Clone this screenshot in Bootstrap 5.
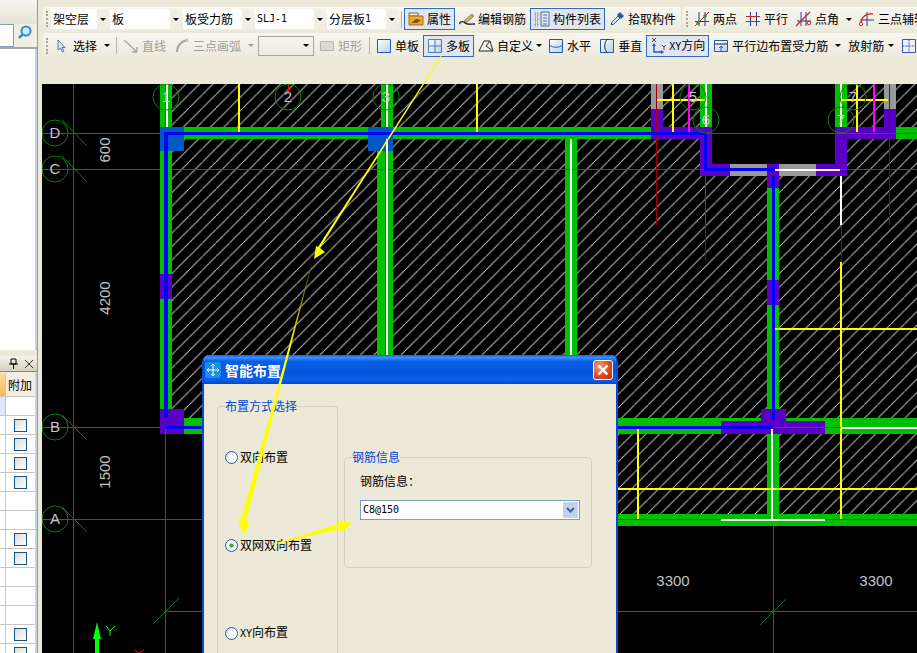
<!DOCTYPE html>
<html lang="zh">
<head>
    <meta charset="UTF-8">
    <title>智能布置</title>
    <link href="https://cdn.jsdelivr.net/npm/bootstrap@5.3.0/dist/css/bootstrap.min.css" rel="stylesheet">
    <style>
        html, body {
            margin: 0;
            width: 917px;
            height: 653px;
            overflow: hidden;
            background-color: #ece9d8;
            font-family: "Noto Sans CJK SC", "Liberation Sans", sans-serif;
            font-size: 12px;
            line-height: 12px;
            color: #000;
        }
        .lat { font-family: "DejaVu Sans Mono", monospace; font-size: 10px; }
        .shell { width: 917px; height: 653px; overflow: hidden; }

        /* left dock */
        .dock { width: 42px; height: 653px; flex: none; overflow: hidden; }
        .dock-inner { width: 38px; height: 653px; border-right: 1px solid #9a9a90; overflow: hidden; }
        .dock-inner > div { flex: none; }
        .dock-head { height: 24px; background: linear-gradient(#f6f5ee, #e6e3d2); }
        .dock-search { height: 25px; border-bottom: 2px solid #a8a89c; background: #f1efe4; }
        .dock-input { width: 14px; height: 23px; background: #fff; border: 1px solid #7f9db9; border-left: 0; }
        .dock-white { height: 301px; background: #fff; border-right: 2px solid #c3d3e6; }
        .dock-gap { height: 6px; }
        .dock-title { height: 16px; background: linear-gradient(#f4f3ea, #d4d0c0); border-bottom: 1px solid #85857a; padding: 0 4px 0 9px; }
        .grid-wrap { background: #fff; margin-top: 1px; border-right: 2px solid #c3d3e6; }
        .grid-row { height: 19px; border-bottom: 1px solid #c6c6c6; }
        .grid-row.top-row { height: 24px; }
        .grid-row.last-row { height: 10px; border-bottom: 0; align-items: flex-start; }
        .grid-lead { width: 6px; height: 100%; border-right: 1px solid #c6c6c6; }
        .top-row .grid-lead { background: linear-gradient(#fbdc9c, #f4b95c); }
        .grid-row.sel-row .grid-lead { background: #dde7f6; }
        .grid-cell { flex: 1; height: 100%; }
        .top-row .grid-cell { background: #f1efe4; font-size: 12px; padding-left: 2px; }
        .last-row .grid-cell { padding-top: 3px; overflow: hidden; }
        .grid-check.form-check-input {
            width: 13px;
            height: 13px;
            margin: 0;
            flex: none;
            border: 1px solid #1c5180;
            border-radius: 0;
            background: linear-gradient(135deg, #dcdcd6, #fff);
        }

        /* toolbars */
        .work { width: 875px; height: 653px; flex: none; overflow: hidden; }
        .bars { height: 84px; padding-top: 7px; flex: none; }
        .tool-row { height: 24px; white-space: nowrap; }
        .tool-row.second { height: 25px; margin-top: 2px; }
        .tool-bar { height: 100%; background: linear-gradient(#f7f6ef, #eceadc); border-radius: 3px; padding-left: 3px; }
        .bar-main { width: 638px; margin-left: 1px; flex: none; }
        .bar-axis { flex: 1; min-width: 0; margin-left: 2px; overflow: hidden; border-radius: 3px 0 0 3px; }
        .bar-wide { width: 100%; margin-left: 1px; overflow: hidden; }
        .grip { width: 2px; height: 16px; margin-right: 2px; border-left: 2px dotted #a8a69a; flex: none; }
        .bar-main .grip { margin-right: 3px; }
        .tb-sep { width: 1px; height: 17px; background: #b5b3a5; margin: 0 2px 0 3px; flex: none; }
        .bar-main .tb-sep { margin-left: 2px; }
        .tb-btn {
            height: 22px;
            padding: 0 3px;
            gap: 3px;
            border: 1px solid transparent;
            flex: none;
        }
        .tb-btn svg { width: 16px; height: 16px; flex: none; }
        .tb-btn.on { border-color: #316ac5; background: #e1e6ee; }
        .tb-btn.off { color: #a19f92; }
        .tb-caret { width: 0; height: 0; border-left: 3px solid transparent; border-right: 3px solid transparent; border-top: 3px solid #000; flex: none; }
        .tb-btn.off .tb-caret { border-top-color: #a19f92; }
        .caret-wide { margin: 0 -1px 0 4px; }
        .caret-tight { margin: 0 -2px 0 0; }
        .caret-after { margin: 0 -1px 0 1px; }
        .pick { height: 20px; margin-right: 2px; flex: none; }
        .pick-text { background: #fff; height: 20px; padding-left: 2px; }
        .pick-arrow { width: 11px; height: 20px; background: #f1efe4; }
        .pick-off { width: 56px; height: 20px; border: 1px solid #a8a69a; margin: 0 1px; padding-right: 4px; flex: none; }

        /* canvas */
        .cad { height: 569px; background: #000; overflow: hidden; flex: none; }
        .cad svg { display: block; }
        .axis-text { font-family: "Liberation Sans", sans-serif; font-size: 15px; fill: #c4c4c4; text-anchor: middle; }

        /* dialog */
        .xp-dialog {
            position: absolute;
            left: 160px;
            top: 355px;
            width: 416px;
            height: 298px;
            overflow: hidden;
            background: #ece9d8;
            border: 2px solid #0a48d8;
            border-top: 0;
            border-bottom: 0;
            border-radius: 7px 7px 0 0;
        }
        .xp-title {
            height: 29px;
            margin: 0 -2px;
            padding: 0 5px 0 3px;
            border-radius: 7px 7px 0 0;
            background: linear-gradient(#0a5be0 0, #3a93ff 8%, #0a5fe8 22%, #0554dc 60%, #0a62ec 85%, #0446c8 100%);
        }
        .xp-title-text { color: #fff; font-size: 14px; font-weight: 700; line-height: 14px; margin-left: 4px; }
        .xp-close {
            width: 20px;
            height: 20px;
            padding: 0;
            border: 1px solid #fff;
            border-radius: 3px;
            background: radial-gradient(circle at 30% 30%, #f0a080, #d8451c 60%, #b8300c);
        }
        .xp-body { height: 269px; overflow: hidden; padding: 16px 0 0 13px; gap: 6px; }
        .xp-group { border: 1px solid #d0d0bf; border-radius: 4px; min-width: 0; margin: 0; flex: none; }
        .xp-group legend {
            float: none;
            width: auto;
            margin: 0;
            padding: 0;
            font-size: 12px;
            line-height: 12px;
            color: #0046d5;
        }
        .way-group { width: 121px; height: 253px; padding: 37px 0 0 7px; gap: 72px; border-bottom: 0; border-radius: 4px 4px 0 0; }
        .bar-group { width: 248px; height: 117px; margin-top: 51px; padding: 12px 0 0 15px; }
        .bar-group legend { margin-left: -8px; }
        .way-item { height: 16px; margin: 0; padding: 0; min-height: 0; gap: 2px; }
        .way-radio.form-check-input {
            float: none;
            width: 13px;
            height: 13px;
            margin: 0;
            border: 1px solid #34608a;
            background: radial-gradient(circle at 65% 65%, #fff 40%, #c8ccd2 100%);
        }
        .way-radio.form-check-input:checked {
            border-color: #34608a;
            background: radial-gradient(circle, #2fa84a 0, #2fa84a 22%, #fff 32%, #fff 55%, #c8ccd2 100%);
        }
        .way-label { margin: 0; opacity: 1 !important; }
        .rebar-label { margin-bottom: 13px; }
        .rebar-combo { width: 220px; height: 20px; background: #fff; border: 1px solid #7f9db9; padding: 1px 1px 1px 2px; }
        .rebar-btn { width: 15px; height: 16px; background: #c1d2ee; border-radius: 1px; }

        .arrow-layer { position: absolute; left: 0; top: 0; width: 917px; height: 653px; pointer-events: none; }
    </style>
</head>

<body>
    <div class="shell d-flex position-relative">
        <!-- 左侧面板 -->
        <div class="dock">
            <div class="dock-inner d-flex flex-column">
                <div class="dock-head"></div>
                <div class="dock-search d-flex">
                    <div class="dock-input"></div>
                    <svg class="ms-1" width="16" height="16" viewBox="0 0 16 16"><circle cx="9" cy="7" r="4.5" fill="#d6ecfb" stroke="#2b8fd8" stroke-width="2"/><path d="M5.5 10.5 2 14" stroke="#2b8fd8" stroke-width="2.5"/></svg>
                </div>
                <div class="dock-white"></div>
                <div class="dock-gap"></div>
                <div class="dock-title d-flex align-items-center justify-content-between">
                    <svg width="9" height="11" viewBox="0 0 9 11"><path d="M2 1h5v5H2zM0 6h9M4.5 6v5" fill="none" stroke="#000"/></svg>
                    <svg width="8" height="8" viewBox="0 0 8 8"><path d="M0 0l8 8M8 0l-8 8" stroke="#333"/></svg>
                </div>
                <div class="grid-wrap">
                    <div class="grid-row top-row d-flex"><div class="grid-lead"></div><div class="grid-cell d-flex align-items-center">附加</div></div>
                    <div class="grid-row sel-row d-flex"><div class="grid-lead"></div><div class="grid-cell"></div></div>
                    <div class="grid-row d-flex"><div class="grid-lead"></div><div class="grid-cell d-flex align-items-center justify-content-center"><input class="grid-check form-check-input" type="checkbox"></div></div>
                    <div class="grid-row d-flex"><div class="grid-lead"></div><div class="grid-cell d-flex align-items-center justify-content-center"><input class="grid-check form-check-input" type="checkbox"></div></div>
                    <div class="grid-row d-flex"><div class="grid-lead"></div><div class="grid-cell d-flex align-items-center justify-content-center"><input class="grid-check form-check-input" type="checkbox"></div></div>
                    <div class="grid-row d-flex"><div class="grid-lead"></div><div class="grid-cell d-flex align-items-center justify-content-center"><input class="grid-check form-check-input" type="checkbox"></div></div>
                    <div class="grid-row d-flex"><div class="grid-lead"></div><div class="grid-cell"></div></div>
                    <div class="grid-row d-flex"><div class="grid-lead"></div><div class="grid-cell"></div></div>
                    <div class="grid-row d-flex"><div class="grid-lead"></div><div class="grid-cell d-flex align-items-center justify-content-center"><input class="grid-check form-check-input" type="checkbox"></div></div>
                    <div class="grid-row d-flex"><div class="grid-lead"></div><div class="grid-cell d-flex align-items-center justify-content-center"><input class="grid-check form-check-input" type="checkbox"></div></div>
                    <div class="grid-row d-flex"><div class="grid-lead"></div><div class="grid-cell"></div></div>
                    <div class="grid-row d-flex"><div class="grid-lead"></div><div class="grid-cell"></div></div>
                    <div class="grid-row d-flex"><div class="grid-lead"></div><div class="grid-cell"></div></div>
                    <div class="grid-row d-flex"><div class="grid-lead"></div><div class="grid-cell d-flex align-items-center justify-content-center"><input class="grid-check form-check-input" type="checkbox"></div></div>
                    <div class="grid-row last-row d-flex"><div class="grid-lead"></div><div class="grid-cell d-flex justify-content-center"><input class="grid-check form-check-input" type="checkbox"></div></div>
                </div>
            </div>
        </div>

        <div class="work d-flex flex-column position-relative">
            <!-- 工具栏 -->
            <div class="bars">
                <div class="tool-row d-flex">
                    <div class="tool-bar bar-main d-flex align-items-center">
                        <div class="grip"></div>
                        <div class="pick d-flex"><div class="pick-text d-flex align-items-center" style="width:46px">架空层</div><div class="pick-arrow d-flex align-items-center justify-content-center"><span class="tb-caret"></span></div></div>
                        <div class="pick d-flex"><div class="pick-text d-flex align-items-center" style="width:60px">板</div><div class="pick-arrow d-flex align-items-center justify-content-center"><span class="tb-caret"></span></div></div>
                        <div class="pick d-flex"><div class="pick-text d-flex align-items-center" style="width:59px">板受力筋</div><div class="pick-arrow d-flex align-items-center justify-content-center"><span class="tb-caret"></span></div></div>
                        <div class="pick d-flex"><div class="pick-text d-flex align-items-center lat" style="width:59px">SLJ-1</div><div class="pick-arrow d-flex align-items-center justify-content-center"><span class="tb-caret"></span></div></div>
                        <div class="pick d-flex"><div class="pick-text d-flex align-items-center" style="width:59px">分层板<span class="lat">1</span></div><div class="pick-arrow d-flex align-items-center justify-content-center"><span class="tb-caret"></span></div></div>
                        <div class="tb-sep"></div>
                        <div class="tb-btn on d-flex align-items-center">
                            <svg viewBox="0 0 16 16"><path d="M1 2h9v3H1z" fill="#eee" stroke="#8a6a30"/><path d="M1 5h14v9H1z" fill="#f4a830" stroke="#a86c10"/><path d="M3 12l5-4 5 1-4 3z" fill="#6a5a28"/></svg>属性
                        </div>
                        <div class="tb-btn d-flex align-items-center">
                            <svg viewBox="0 0 16 16"><path d="M5 10 13 3l2 2-8 7z" fill="#d8b070" stroke="#7a5a30" stroke-width=".7"/><path d="M0 13c2-3 4-3 6-1s5 1 10 1" fill="none" stroke="#222" stroke-width="1.4"/></svg>编辑钢筋
                        </div>
                        <div class="tb-btn on d-flex align-items-center">
                            <svg viewBox="0 0 16 16"><path d="M1 2h3v3H1zM1 7h3v3H1zM1 12h3v3H1z" fill="none" stroke="#555" stroke-width=".8" stroke-dasharray="1 1"/><path d="M7 1h8v14H7z" fill="#dfe9f7" stroke="#4b6fa8"/><path d="M9 4h4M9 7h4M9 10h4M9 13h4" stroke="#4b6fa8"/></svg>构件列表
                        </div>
                        <div class="tb-btn d-flex align-items-center">
                            <svg viewBox="0 0 16 16"><path d="M2 14l1-3 6-6 2 2-6 6z" fill="#cfe6fa" stroke="#1f5fa8"/><path d="M8 4l3-3 4 4-3 3z" fill="#1f5fa8"/></svg>拾取构件
                        </div>
                    </div>
                    <div class="tool-bar bar-axis d-flex align-items-center">
                        <div class="grip"></div>
                        <div class="tb-btn d-flex align-items-center">
                            <svg viewBox="0 0 16 16"><path d="M5 1v14M11 1v14M1 10.500h14" stroke="#2a3a90" fill="none"/><path d="M1 15 15 1" stroke="#d02020"/><circle cx="4" cy="12" r="1.8" fill="#2a9a2a"/><circle cx="11" cy="5" r="1.8" fill="#2a9a2a"/></svg>两点
                        </div>
                        <div class="tb-btn d-flex align-items-center">
                            <svg viewBox="0 0 16 16"><path d="M5.500 1v14M11.500 1v14" stroke="#2a3a90" fill="none"/><path d="M1 5.500h14M1 10.500h14" stroke="#d02020" fill="none"/></svg>平行
                        </div>
                        <div class="tb-btn d-flex align-items-center">
                            <svg viewBox="0 0 16 16"><path d="M5 1v14M10 1v14M1 10h14" stroke="#2a3a90" fill="none"/><path d="M0 15 14 1" stroke="#d02020" stroke-width="1.3"/><circle cx="13" cy="12" r="1.8" fill="none" stroke="#d02020"/></svg>点角<span class="tb-caret caret-wide"></span>
                        </div>
                        <div class="tb-btn d-flex align-items-center">
                            <svg viewBox="0 0 16 16"><path d="M8 1v14M1 9h14" stroke="#2a3a90" fill="none"/><path d="M2 13C2 6 7 2 14 3" stroke="#d02020" fill="none" stroke-width="1.3"/><circle cx="2" cy="13" r="1.6" fill="#fff" stroke="#d02020"/></svg>三点辅轴
                        </div>
                    </div>
                </div>

                <div class="tool-row second d-flex">
                    <div class="tool-bar bar-wide d-flex align-items-center">
                        <div class="grip"></div>
                        <div class="tb-btn d-flex align-items-center">
                            <svg viewBox="0 0 16 16"><path d="M4 2v10l2.500-2 2 4 1.500-1-2-3.500h3z" fill="#dce8f6" stroke="#3a5a90" stroke-width=".8"/></svg>选择<span class="tb-caret caret-wide"></span>
                        </div>
                        <div class="tb-sep"></div>
                        <div class="tb-btn off d-flex align-items-center">
                            <svg viewBox="0 0 16 16"><path d="M1 2 14 14M14 14V9M14 14H9" stroke="#a8a69a" stroke-width="1.3" fill="none"/></svg>直线
                        </div>
                        <div class="tb-btn off d-flex align-items-center">
                            <svg viewBox="0 0 16 16"><path d="M3 14C3 8 7 3 14 2" stroke="#a8a69a" stroke-width="2" fill="none"/><circle cx="13" cy="2.500" r="1.500" fill="#c8c6b8"/></svg>三点画弧<span class="tb-caret caret-wide"></span>
                        </div>
                        <div class="pick-off d-flex align-items-center justify-content-end"><span class="tb-caret"></span></div>
                        <div class="tb-btn off d-flex align-items-center">
                            <svg viewBox="0 0 16 16"><path d="M1.500 3.500h13v9h-13z" fill="#dcdad0" stroke="#b8b6a8"/></svg>矩形
                        </div>
                        <div class="tb-sep"></div>
                        <div class="tb-btn d-flex align-items-center">
                            <svg viewBox="0 0 16 16"><defs><linearGradient id="paneFill" x1="0" y1="0" x2="1" y2="1"><stop offset="0" stop-color="#fff"/><stop offset="1" stop-color="#b9cfe8"/></linearGradient></defs><path d="M1.500 1.500h13v13h-13z" fill="url(#paneFill)" stroke="#1e5aa8"/></svg>单板
                        </div>
                        <div class="tb-btn on d-flex align-items-center">
                            <svg viewBox="0 0 16 16"><path d="M1.500 1.500h13v13h-13z" fill="url(#paneFill)" stroke="#4f7db5"/><path d="M8 1.500v13M1.500 8h13" stroke="#4f7db5"/></svg>多板
                        </div>
                        <div class="tb-btn d-flex align-items-center">
                            <svg viewBox="0 0 16 16"><path d="M1 13 6 3h6l3 10z" fill="#f4f3ea" stroke="#222"/><path d="M12 3 8 8l7 5" fill="none" stroke="#222"/></svg>自定义<span class="tb-caret caret-tight"></span>
                        </div>
                        <div class="tb-btn d-flex align-items-center">
                            <svg viewBox="0 0 16 16"><path d="M1.500 1.500h13v13h-13z" fill="url(#paneFill)" stroke="#1e5aa8"/><path d="M1.500 7C5 10 11 10 14.500 7" fill="none" stroke="#1e5aa8"/></svg>水平
                        </div>
                        <div class="tb-btn d-flex align-items-center">
                            <svg viewBox="0 0 16 16"><path d="M1.500 1.500h13v13h-13z" fill="url(#paneFill)" stroke="#1e5aa8"/><path d="M8 1.500C5 5 5 11 8 14.500" fill="none" stroke="#222"/></svg>垂直
                        </div>
                        <div class="tb-btn on d-flex align-items-center">
                            <svg viewBox="0 0 16 16"><path d="M4 6v8h8" fill="none" stroke="#1e5aa8" stroke-width="1.4"/><path d="M2 8l2-3 2 3zM11 12l3 2-3 2z" fill="#1e5aa8"/><path d="M2 0l4 4M6 0 2 4M12 7l2 2 2-2M14 9v3" stroke="#222" fill="none" stroke-width=".8"/></svg><span><span class="lat">XY</span>方向</span>
                        </div>
                        <div class="tb-btn d-flex align-items-center">
                            <svg viewBox="0 0 16 16"><path d="M1.500 2.500h13v11h-13z" fill="url(#paneFill)" stroke="#1e5aa8"/><path d="M2 6h12" stroke="#222"/><path d="M8 8v5M6 10l2-2 2 2" stroke="#1e5aa8" fill="none"/></svg>平行边布置受力筋<span class="tb-caret caret-wide"></span>
                        </div>
                        <div class="tb-btn d-flex align-items-center">放射筋<span class="tb-caret caret-after"></span></div>
                        <div class="tb-btn d-flex align-items-center">
                            <svg viewBox="0 0 16 16"><path d="M1.500 1.500h13v13h-13z" fill="#eef2fa" stroke="#3a4fc0"/><path d="M1.500 8h13M8 1.500v13" stroke="#3a4fc0" stroke-dasharray="2 1"/></svg>
                        </div>
                    </div>
                </div>
            </div>

            <!-- 绘图区 -->
            <div class="cad">
                <svg width="875" height="569" viewBox="42 84 875 569">
                    <defs>
                        <pattern id="hatch" width="13.5" height="13.5" patternUnits="userSpaceOnUse">
                            <path d="M-1 14.500 14.500 -1" stroke="#bdbdbd" stroke-width="1"/>
                        </pattern>
                    </defs>
                    <!-- 板填充 -->
                    <path d="M172 84H917V514H172z" fill="url(#hatch)"/>
                    <path d="M712 84H835V164H712z" fill="#000"/>
                    <path d="M172 434H617V514H172z" fill="#000"/>

                    <!-- 轴网 -->
                    <g stroke="#0b7d0b" fill="none" shape-rendering="crispEdges">
                        <path d="M73.500 84V653M42 133.500H160M42 169.500H160M42 427.500H165M42 519.500H165M165.500 519V653M165 611.500H917M773.500 526V653"/>
                    </g>
                    <g stroke="#0b7d0b" fill="none">
                        <path d="M62 120 87 146M62 156 87 182M62 415 87 440M62 507 87 532M153 624 179 598M760 625 786 599"/>
                        <circle cx="55" cy="133" r="13"/>
                        <circle cx="55" cy="169" r="13"/>
                        <circle cx="55" cy="427" r="13"/>
                        <circle cx="55" cy="519" r="13"/>
                    </g>

                    <!-- 墙 -->
                    <g fill="#00c000">
                        <rect x="160" y="84" width="12" height="350"/>
                        <rect x="160" y="127" width="540" height="12"/>
                        <rect x="381" y="84" width="12" height="50"/>
                        <rect x="377" y="139" width="16" height="290"/>
                        <rect x="565" y="139" width="12" height="290"/>
                        <rect x="700" y="84" width="12" height="50"/>
                        <rect x="835" y="84" width="12" height="50"/>
                        <rect x="896" y="127" width="21" height="12"/>
                        <rect x="767" y="188" width="12" height="338"/>
                        <rect x="160" y="418" width="757" height="16"/>
                        <rect x="617" y="514" width="300" height="12"/>
                    </g>
                    <g fill="#999">
                        <rect x="651" y="84" width="12" height="25"/>
                        <rect x="884" y="84" width="12" height="25"/>
                        <rect x="730" y="164" width="37" height="12"/>
                        <rect x="779" y="164" width="37" height="12"/>
                    </g>
                    <g fill="#5a00c4">
                        <rect x="651" y="109" width="12" height="30"/>
                        <rect x="651" y="127" width="61" height="12"/>
                        <rect x="700" y="127" width="12" height="49"/>
                        <rect x="700" y="164" width="30" height="12"/>
                        <rect x="767" y="164" width="12" height="24"/>
                        <rect x="816" y="164" width="31" height="12"/>
                        <rect x="835" y="127" width="12" height="49"/>
                        <rect x="835" y="127" width="61" height="12"/>
                        <rect x="884" y="109" width="12" height="30"/>
                        <rect x="767" y="280" width="12" height="25"/>
                        <rect x="160" y="274" width="12" height="25"/>
                        <rect x="160" y="409" width="24" height="25"/>
                        <rect x="721" y="421" width="104" height="13"/>
                        <rect x="761" y="409" width="25" height="12"/>
                    </g>
                    <g fill="#0058c4">
                        <rect x="160" y="127" width="24" height="24"/>
                        <rect x="368" y="127" width="25" height="24"/>
                    </g>

                    <!-- 钢筋线 -->
                    <g fill="none" shape-rendering="crispEdges">
                        <path stroke="#ffff00" stroke-width="2" d="M239 84V132M477 84V132M673 84V132M657 100H705M857 84V132M842 100H888M841 262V519M775 329H917M617 489H917M638 429V519"/>
                        <path stroke="#ff00ff" stroke-width="2" d="M689 84V132M874 84V132"/>
                        <path stroke="#ff0000" d="M172 169.500H917M707 133.500H917M165.500 429V519M165 519.500H203M617 519.500H721M825 519.500H917M775 427.500H841"/>
                        <path stroke="#a00000" d="M656.500 84V225M705.500 225V261M889.500 84V225M841.500 225V262"/>
                        <path stroke="#0b7d0b" d="M705.500 176V225M841.500 176V225"/>
                        <path stroke="#fff" stroke-width="2" d="M167 84V127M387 84V127M387 139V355M571 139V355M706 84V127M841 84V127M775 170H840M841 176V225M772 429V520M721 519.500H825M841 428H917"/>
                        <path stroke="#ff0000" d="M165.500 84V127M385.500 84V355M288.500 84V92"/>
                        <path stroke="#0000ff" stroke-width="4" d="M166 132V418"/>
                        <path stroke="#0000ff" stroke-width="3" d="M164 133.500H705M705.500 132V170M705 169.500H775M773.500 176V420M166 427.500H772"/>
                    </g>

                    <!-- 轴号 -->
                    <g stroke="#0b7d0b" fill="none">
                        <circle cx="166" cy="97" r="13"/>
                        <circle cx="288" cy="97" r="13"/>
                        <circle cx="386" cy="97" r="13"/>
                        <circle cx="693" cy="97" r="13"/>
                        <circle cx="706" cy="120" r="13"/>
                        <circle cx="853" cy="97" r="13"/>
                        <circle cx="841" cy="120" r="13"/>
                    </g>
                    <text class="axis-text" x="55" y="138">D</text>
                    <text class="axis-text" x="55" y="174">C</text>
                    <text class="axis-text" x="55" y="432">B</text>
                    <text class="axis-text" x="55" y="524">A</text>
                    <text class="axis-text" x="166" y="102">1</text>
                    <text class="axis-text" x="288" y="102">2</text>
                    <text class="axis-text" x="386" y="102">3</text>
                    <text class="axis-text" x="693" y="102">5</text>
                    <text class="axis-text" x="706" y="125">6</text>
                    <text class="axis-text" x="853" y="102">7</text>
                    <text class="axis-text" x="841" y="125">7</text>

                    <!-- 尺寸 -->
                    <text class="axis-text" transform="translate(110 150) rotate(-90)">600</text>
                    <text class="axis-text" transform="translate(110 298) rotate(-90)">4200</text>
                    <text class="axis-text" transform="translate(110 472) rotate(-90)">1500</text>
                    <text class="axis-text" x="673" y="586">3300</text>
                    <text class="axis-text" x="876" y="586">3300</text>

                    <!-- 坐标 -->
                    <path d="M95 653V639H93L97 622 101 639H99V653z" fill="#00ff00"/>
                    <path d="M106 626 110 631 115 626M110 631V636" stroke="#00ff00" fill="none"/>
                    <path d="M134 650 139 653M144 650 139 653" stroke="#ff0000" fill="none"/>
                </svg>
            </div>

            <!-- 智能布置对话框 -->
            <div class="xp-dialog">
                <div class="xp-title d-flex align-items-center">
                    <svg width="16" height="16" viewBox="0 0 16 16"><rect width="16" height="16" rx="3" fill="#1a8fe8"/><path d="M8 2v12M2 8h12M6 4l2-2 2 2M6 12l2 2 2-2M4 6 2 8l2 2M12 6l2 2-2 2" fill="none" stroke="#fff"/></svg>
                    <span class="xp-title-text flex-grow-1">智能布置</span>
                    <button type="button" class="xp-close d-flex align-items-center justify-content-center" aria-label="Close">
                        <svg width="12" height="12" viewBox="0 0 12 12"><path d="M1.500 1.500l9 9M10.500 1.500l-9 9" stroke="#fff" stroke-width="2.400"/></svg>
                    </button>
                </div>
                <div class="xp-body d-flex align-items-start">
                    <fieldset class="xp-group way-group d-flex flex-column">
                        <legend>布置方式选择</legend>
                        <div class="way-item form-check d-flex align-items-center">
                            <input class="way-radio form-check-input" type="radio" name="way" id="way1">
                            <label class="way-label form-check-label" for="way1">双向布置</label>
                        </div>
                        <div class="way-item form-check d-flex align-items-center">
                            <input class="way-radio form-check-input" type="radio" name="way" id="way2" checked>
                            <label class="way-label form-check-label" for="way2">双网双向布置</label>
                        </div>
                        <div class="way-item form-check d-flex align-items-center">
                            <input class="way-radio form-check-input" type="radio" name="way" id="way3">
                            <label class="way-label form-check-label" for="way3"><span class="lat">XY</span>向布置</label>
                        </div>
                    </fieldset>
                    <fieldset class="xp-group bar-group">
                        <legend>钢筋信息</legend>
                        <div class="rebar-label">钢筋信息：</div>
                        <div class="rebar-combo d-flex align-items-center justify-content-between">
                            <span class="lat">C8@150</span>
                            <span class="rebar-btn d-flex align-items-center justify-content-center">
                                <svg width="9" height="7" viewBox="0 0 9 7"><path d="M1 1l3.500 3.500L8 1" fill="none" stroke="#4d6185" stroke-width="2"/></svg>
                            </span>
                        </div>
                    </fieldset>
                </div>
            </div>
        </div>

        <!-- 说明箭头 -->
        <svg class="arrow-layer" viewBox="0 0 917 653">
            <defs>
                <linearGradient id="fadeArrow" x1="0" y1="0" x2="0" y2="1">
                    <stop offset="0" stop-color="#555500"/>
                    <stop offset=".3" stop-color="#ffff00"/>
                </linearGradient>
            </defs>
            <path d="M440.500 56 441.500 56.500 320 248 325 252 314 259 316 246 318 247z" fill="#ffff00"/>
            <path d="M311.500 266 246 521 250 523 243 535 238 519 241 520 311 266z" fill="url(#fadeArrow)"/>
            <path d="M272 544 271 545 340 529 341 533 352 523 338 520 339 524z" fill="#ffff00"/>
        </svg>
    </div>

    <script src="https://cdn.jsdelivr.net/npm/bootstrap@5.3.0/dist/js/bootstrap.bundle.min.js"></script>
</body>
</html>
